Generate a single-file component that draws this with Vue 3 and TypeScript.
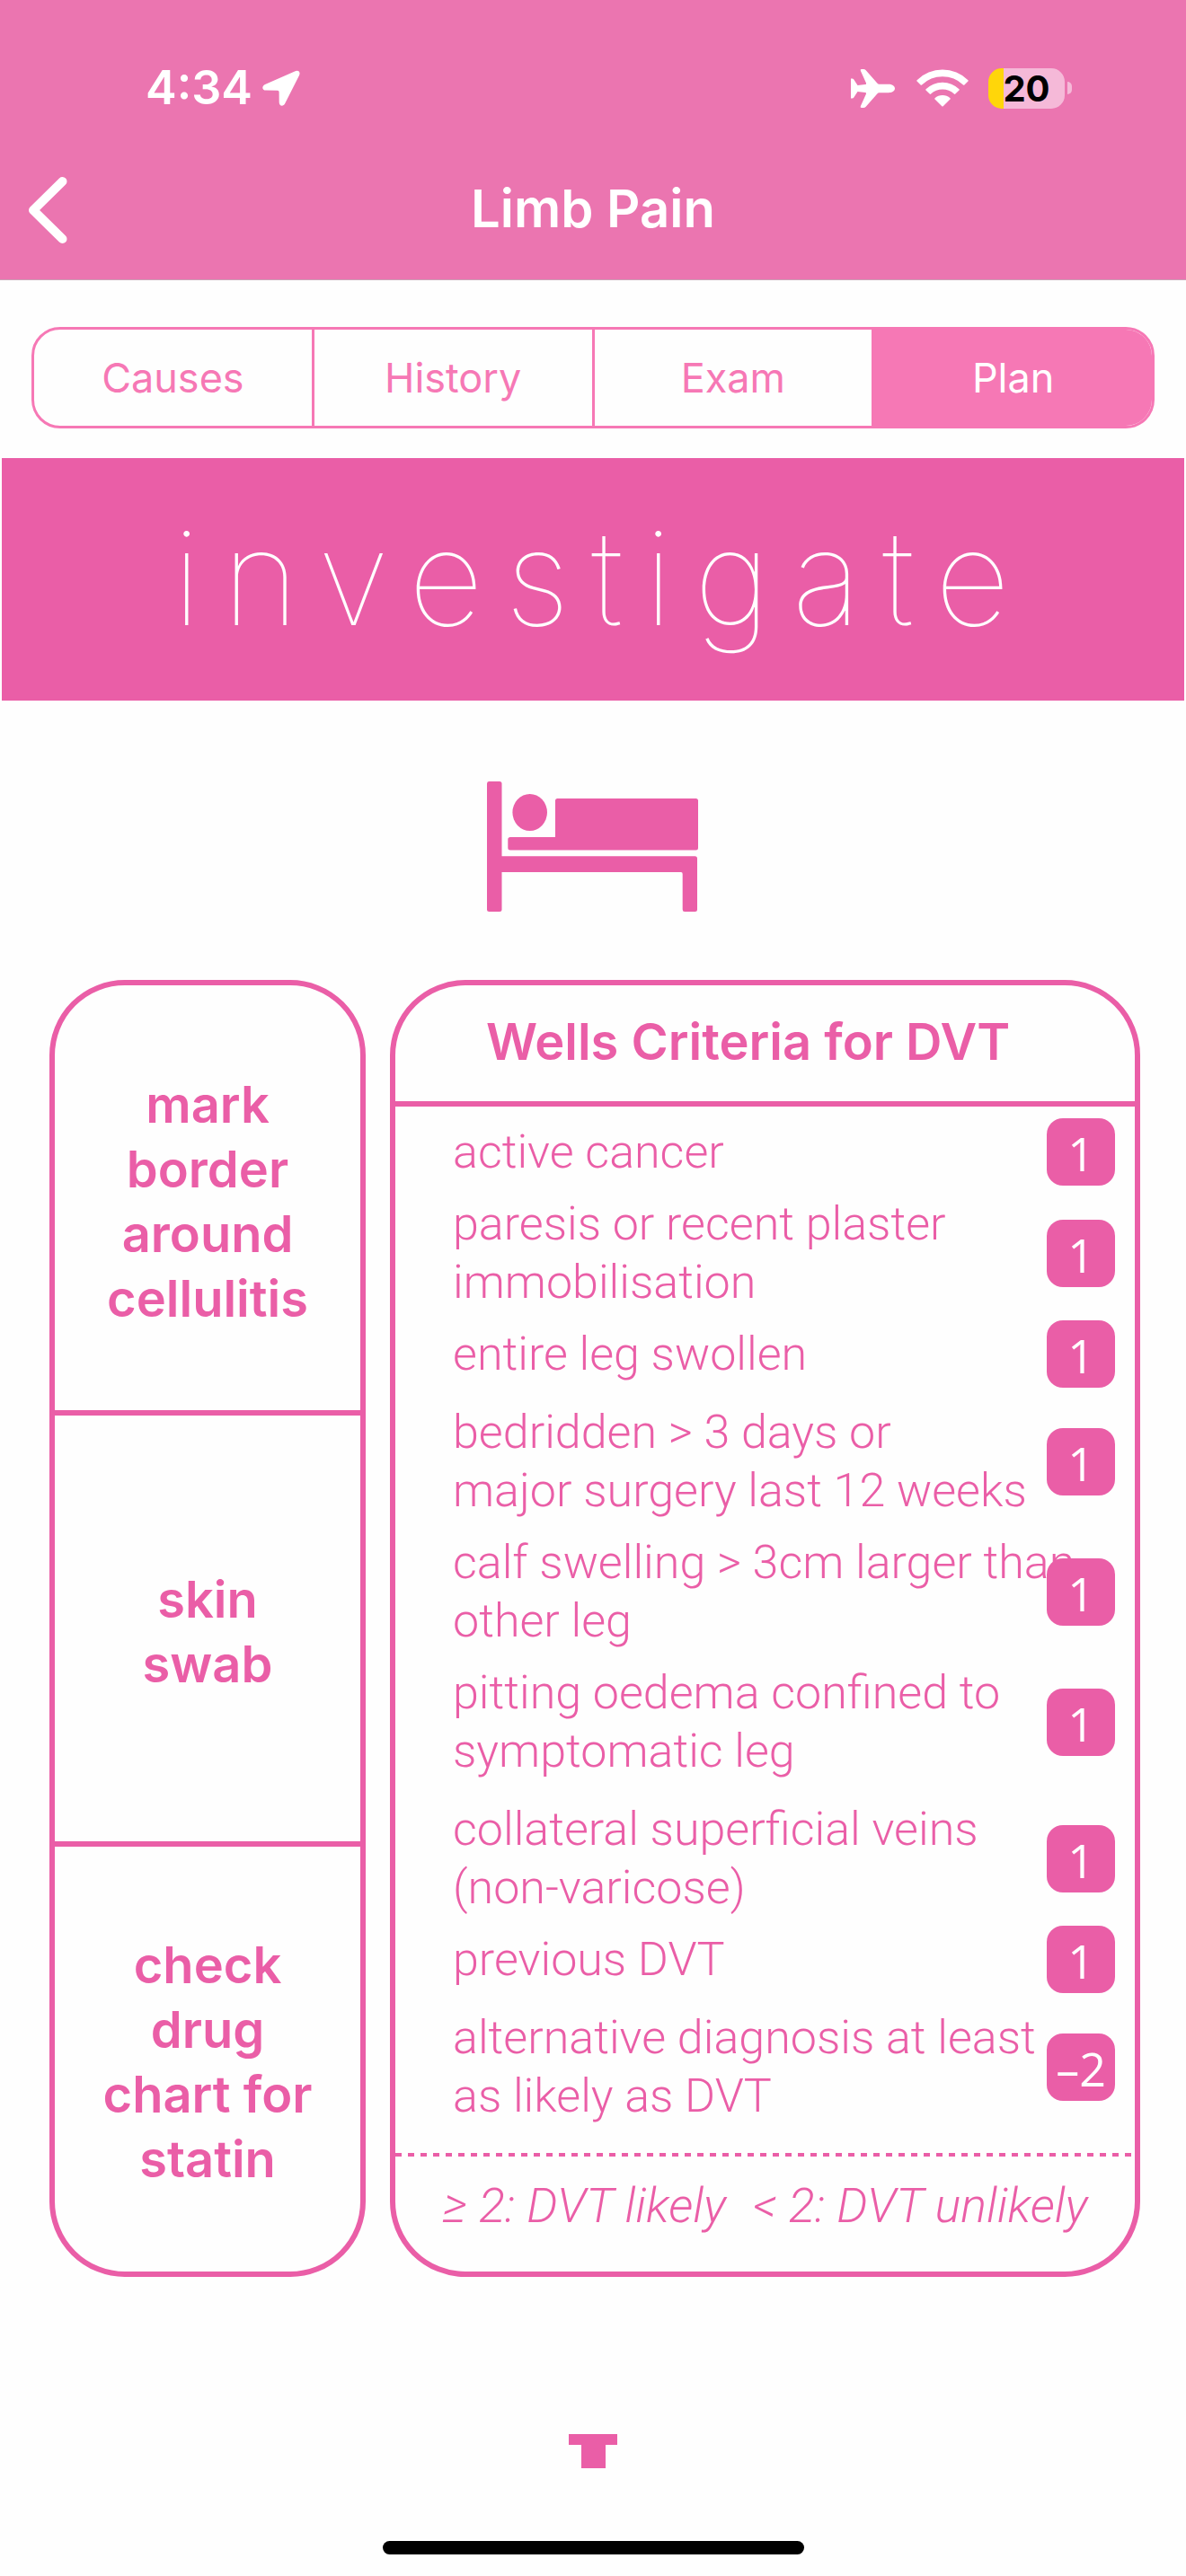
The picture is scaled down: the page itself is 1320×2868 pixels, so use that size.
<script setup lang="ts">
import { ref } from 'vue'

interface Criterion {
  lines: string[]
  score: string
  spaced?: boolean
}

const tabs: string[] = ['Causes', 'History', 'Exam', 'Plan']
const activeTab = ref<string>('Plan')

const actions: string[][] = [
  ['mark', 'border', 'around', 'cellulitis'],
  ['skin', 'swab'],
  ['check', 'drug', 'chart for', 'statin'],
]

const criteria: Criterion[] = [
  { lines: ['active cancer'], score: '1' },
  { lines: ['paresis or recent plaster', 'immobilisation'], score: '1' },
  { lines: ['entire leg swollen'], score: '1', spaced: true },
  { lines: ['bedridden > 3 days or', 'major surgery last 12 weeks'], score: '1' },
  { lines: ['calf swelling > 3cm larger than', 'other leg'], score: '1' },
  { lines: ['pitting oedema confined to', 'symptomatic leg'], score: '1', spaced: true },
  { lines: ['collateral superficial veins', '(non-varicose)'], score: '1' },
  { lines: ['previous DVT'], score: '1', spaced: true },
  { lines: ['alternative diagnosis at least', 'as likely as DVT'], score: '–2' },
]
</script>

<template>
  <div class="screen">
    <header class="header">
      <div class="status">
        <div class="status-left">
          <span class="time">4:34</span>
          <svg class="location" viewBox="0 0 42 40" aria-hidden="true">
            <path d="M36 1.400 L3 16 C-1 18 -0.500 22.500 4 22.600 L17 22.800 Q18.600 22.900 18.600 24.500 L18.700 36 C18.800 40.500 23.500 41 25.300 37 L41 6 C42.800 2 40 -0.500 36 1.400 Z" />
          </svg>
        </div>
        <div class="status-right">
          <svg class="plane" viewBox="0 0 49 43" aria-hidden="true">
            <path d="M49 21.500 C49 18.500 45.500 16.800 42 16.800 H31.500 Q30.300 16.800 29.500 15.700 L16.500 1 Q15.500 0 14 0 H11.800 Q10.200 0 10.800 1.700 L17 15.500 Q17.600 17 16 17.100 L7.500 17.900 L3.300 11.500 Q2.600 10.500 1.500 10.500 H0 V32.500 H1.500 Q2.600 32.500 3.300 31.500 L7.500 25.100 L16 25.900 Q17.600 26 17 27.500 L10.800 41.300 Q10.200 43 11.800 43 H14 Q15.500 43 16.500 42 L29.500 27.300 Q30.300 26.200 31.500 26.200 H42 C45.500 26.200 49 24.500 49 21.500 Z" />
          </svg>
          <svg class="wifi" viewBox="0 0 58 42" aria-hidden="true">
            <path d="M0.600 12.200 A40.500 40.500 0 0 1 57.400 12.200 Q58 12.900 57.400 13.500 L53.400 17.500 Q52.700 18.200 52 17.500 A33 33 0 0 0 6 17.500 Q5.300 18.200 4.600 17.500 L0.600 13.500 Q0 12.900 0.600 12.200 Z" />
            <path d="M10.500 22.200 A26.500 26.500 0 0 1 47.500 22.200 Q48.100 22.900 47.500 23.500 L43.300 27.600 Q42.600 28.200 41.900 27.600 A19 19 0 0 0 16.100 27.600 Q15.400 28.200 14.700 27.600 L10.500 23.500 Q9.900 22.900 10.500 22.200 Z" />
            <path d="M20.500 32.200 A13 13 0 0 1 37.500 32.200 Q38.100 32.900 37.500 33.500 L29.700 41.300 Q29 41.900 28.300 41.300 L20.500 33.500 Q19.900 32.900 20.500 32.200 Z" />
          </svg>
          <div class="battery">
            <span class="battery-body">20</span>
            <span class="battery-tip"></span>
          </div>
        </div>
      </div>
      <div class="navbar">
        <button class="back" type="button" aria-label="Back">
          <svg viewBox="0 0 44 74" aria-hidden="true">
            <path d="M38.500 5 L6 37 L38.500 69" />
          </svg>
        </button>
        <h1 class="title">Limb Pain</h1>
      </div>
    </header>

    <nav class="tabs">
      <button
        v-for="tab in tabs"
        :key="tab"
        type="button"
        class="tab"
        :class="{ active: tab === activeTab }"
        @click="activeTab = tab"
      >
        {{ tab }}
      </button>
    </nav>

    <main class="content">
      <h2 class="banner">investigate</h2>

      <svg class="bed" viewBox="0 0 236 145" aria-hidden="true">
        <path d="M2 0 H14 Q16.500 0 16.500 2.500 V83.300 H231.500 Q234 83.300 234 85.800 V142.500 Q234 145 231.500 145 H220 Q217.700 145 217.700 142.500 V103 Q217.700 101 216 101 H16.500 V142.500 Q16.500 145 14 145 H2.500 Q0 145 0 142.500 V2.500 Q0 0 2 0 Z" />
        <ellipse cx="47.700" cy="34.500" rx="19.300" ry="20.500" />
        <path d="M78.500 19 H232.500 Q235 19 235 21.500 V74 Q235 76.500 232.500 76.500 H26 Q23.300 76.500 23.300 74 V64.500 Q23.300 62 26 62 H76 V21.500 Q76 19 78.500 19 Z" />
      </svg>

      <div class="cards">
        <section class="card actions">
          <p v-for="(action, index) in actions" :key="index" class="action">
            <span v-for="line in action" :key="line">{{ line }}</span>
          </p>
        </section>

        <section class="card wells">
          <h3 class="wells-title">Wells Criteria for DVT</h3>
          <ul class="criteria">
            <li
              v-for="criterion in criteria"
              :key="criterion.lines[0]"
              class="criterion"
              :class="{ spaced: criterion.spaced }"
            >
              <span class="criterion-text">
                <span v-for="line in criterion.lines" :key="line">{{ line }}</span>
              </span>
              <span class="score">{{ criterion.score }}</span>
            </li>
          </ul>
          <p class="verdict">
            <span>≥ 2: DVT likely</span>
            <span>&lt; 2: DVT unlikely</span>
          </p>
        </section>
      </div>

      <svg class="peek" viewBox="0 0 54 38" aria-hidden="true">
        <path d="M0 0 H54 V12 H41 V38 H14 V12 H0 Z" />
      </svg>
    </main>

    <div class="home-indicator"></div>
  </div>
</template>

<style>
body {
  margin: 0;
  background: #fefefe;
}
</style>

<style scoped>
.screen {
  --pink: #ea5ea7;
  --tab-pink: #f678b5;
  display: flex;
  flex-direction: column;
  min-height: 100vh;
  background: #fefefe;
  font-family: Inter, "Liberation Sans", sans-serif;
  color: var(--pink);
}

h1,
h2,
h3,
p,
ul {
  margin: 0;
  padding: 0;
}

button {
  margin: 0;
  padding: 0;
  border: 0;
  background: none;
  font-family: inherit;
  color: inherit;
}

.header {
  background: #eb75b0;
  border-bottom: 1px solid #c9a3b6;
  color: #fff;
}

.status {
  display: flex;
  align-items: center;
  justify-content: space-between;
  height: 116px;
  padding: 40px 127px 0 162px;
}

.status-left,
.status-right {
  display: flex;
  align-items: center;
}

.status-left {
  gap: 11px;
}

.time {
  font-size: 52px;
  line-height: 60px;
  font-weight: 600;
}

.location {
  width: 42px;
  height: 40px;
  fill: #fff;
}

.plane {
  width: 49px;
  height: 43px;
  margin-right: 24px;
  fill: #fff;
}

.wifi {
  width: 58px;
  height: 42px;
  margin-right: 22px;
  fill: #fff;
}

.battery {
  display: flex;
  align-items: center;
  gap: 3px;
}

.battery-body {
  width: 85px;
  height: 45px;
  border-radius: 15px;
  background: linear-gradient(to right, #ffd60a 17px, #f5b9d8 17px);
  color: #000;
  font-size: 40px;
  line-height: 45px;
  font-weight: 700;
  text-align: center;
}

.battery-tip {
  width: 5px;
  height: 14px;
  border-radius: 0 5px 5px 0;
  background: #f5b9d8;
}

.navbar {
  display: grid;
  grid-template-columns: 1fr auto 1fr;
  align-items: center;
  height: 155px;
  padding: 0 31px;
}

.back {
  width: 44px;
  height: 74px;
}

.back svg {
  display: block;
  width: 44px;
  height: 74px;
  fill: none;
  stroke: #fff;
  stroke-width: 10;
  stroke-linecap: round;
  stroke-linejoin: round;
}

.title {
  padding-bottom: 3px;
  font-size: 58px;
  line-height: 72px;
  font-weight: 600;
}

.tabs {
  display: flex;
  height: 107px;
  margin: 52px 35px 33px;
  border: 3px solid var(--tab-pink);
  border-radius: 32px;
  overflow: hidden;
}

.tab {
  box-sizing: content-box;
  flex: 1 1 0;
  border-right: 3px solid var(--tab-pink);
  color: var(--tab-pink);
  font-size: 45px;
  line-height: 56px;
  font-weight: 400;
}

.tab:last-child {
  border-right: 0;
}

.tab.active {
  background: var(--tab-pink);
  color: #fff;
}

.content {
  display: flex;
  flex-direction: column;
  align-items: center;
}

.banner {
  align-self: stretch;
  margin: 0 2px;
  padding: 53px 0 57px 20px;
  background: var(--pink);
  color: #fff;
  font-size: 146px;
  line-height: 160px;
  font-weight: 100;
  letter-spacing: 24px;
  text-align: center;
}

.bed {
  width: 236px;
  height: 145px;
  margin: 90px 0 76px;
  fill: var(--pink);
}

.cards {
  display: flex;
  align-self: stretch;
  gap: 27px;
  margin: 0 51px 0 55px;
}

.card {
  box-sizing: border-box;
  min-width: 0;
  border: 6px solid var(--pink);
  border-radius: 84px;
}

.actions {
  display: flex;
  flex: 340 1 0;
  flex-direction: column;
}

.action {
  display: flex;
  flex: 1 1 0;
  flex-direction: column;
  justify-content: center;
  padding-top: 8px;
  font-size: 56px;
  line-height: 72px;
  font-weight: 600;
  text-align: center;
}

.action + .action {
  border-top: 6px solid var(--pink);
}

.wells {
  flex: 823 1 0;
}

.wells-title {
  padding: 27px 38px 30px 0;
  border-bottom: 6px solid var(--pink);
  font-size: 56px;
  line-height: 72px;
  font-weight: 600;
  text-align: center;
}

.criteria {
  padding: 18px 22px 31px 64px;
  list-style: none;
}

.criterion {
  display: flex;
  align-items: center;
  margin-bottom: 15px;
}

.criterion.spaced {
  margin-bottom: 22px;
}

.criterion:last-child {
  margin-bottom: 0;
}

.criterion-text {
  display: flex;
  flex: 1 1 0;
  flex-direction: column;
  min-width: 0;
  font-family: Roboto, "Liberation Sans", sans-serif;
  font-size: 52px;
  line-height: 65px;
  font-weight: 300;
  white-space: nowrap;
}

.score {
  z-index: 1;
  flex: none;
  width: 76px;
  height: 75px;
  margin: -5px 0;
  border-radius: 18px;
  background: var(--pink);
  color: #fff;
  font-family: "Open Sans", sans-serif;
  font-size: 52px;
  line-height: 77px;
  text-align: center;
}

.verdict {
  display: flex;
  justify-content: center;
  gap: 30px;
  padding: 26px 0 41px;
  background: repeating-linear-gradient(to right, var(--pink) 0 7px, transparent 7px 14px) top / 100% 4px no-repeat;
  font-family: Roboto, "Liberation Sans", sans-serif;
  font-size: 54px;
  line-height: 65px;
  font-weight: 300;
  font-style: italic;
  white-space: nowrap;
}

.peek {
  width: 54px;
  height: 38px;
  margin-top: 175px;
  fill: var(--pink);
}

.home-indicator {
  width: 469px;
  height: 15px;
  margin: auto auto 24px;
  border-radius: 8px;
  background: #000;
}
</style>
